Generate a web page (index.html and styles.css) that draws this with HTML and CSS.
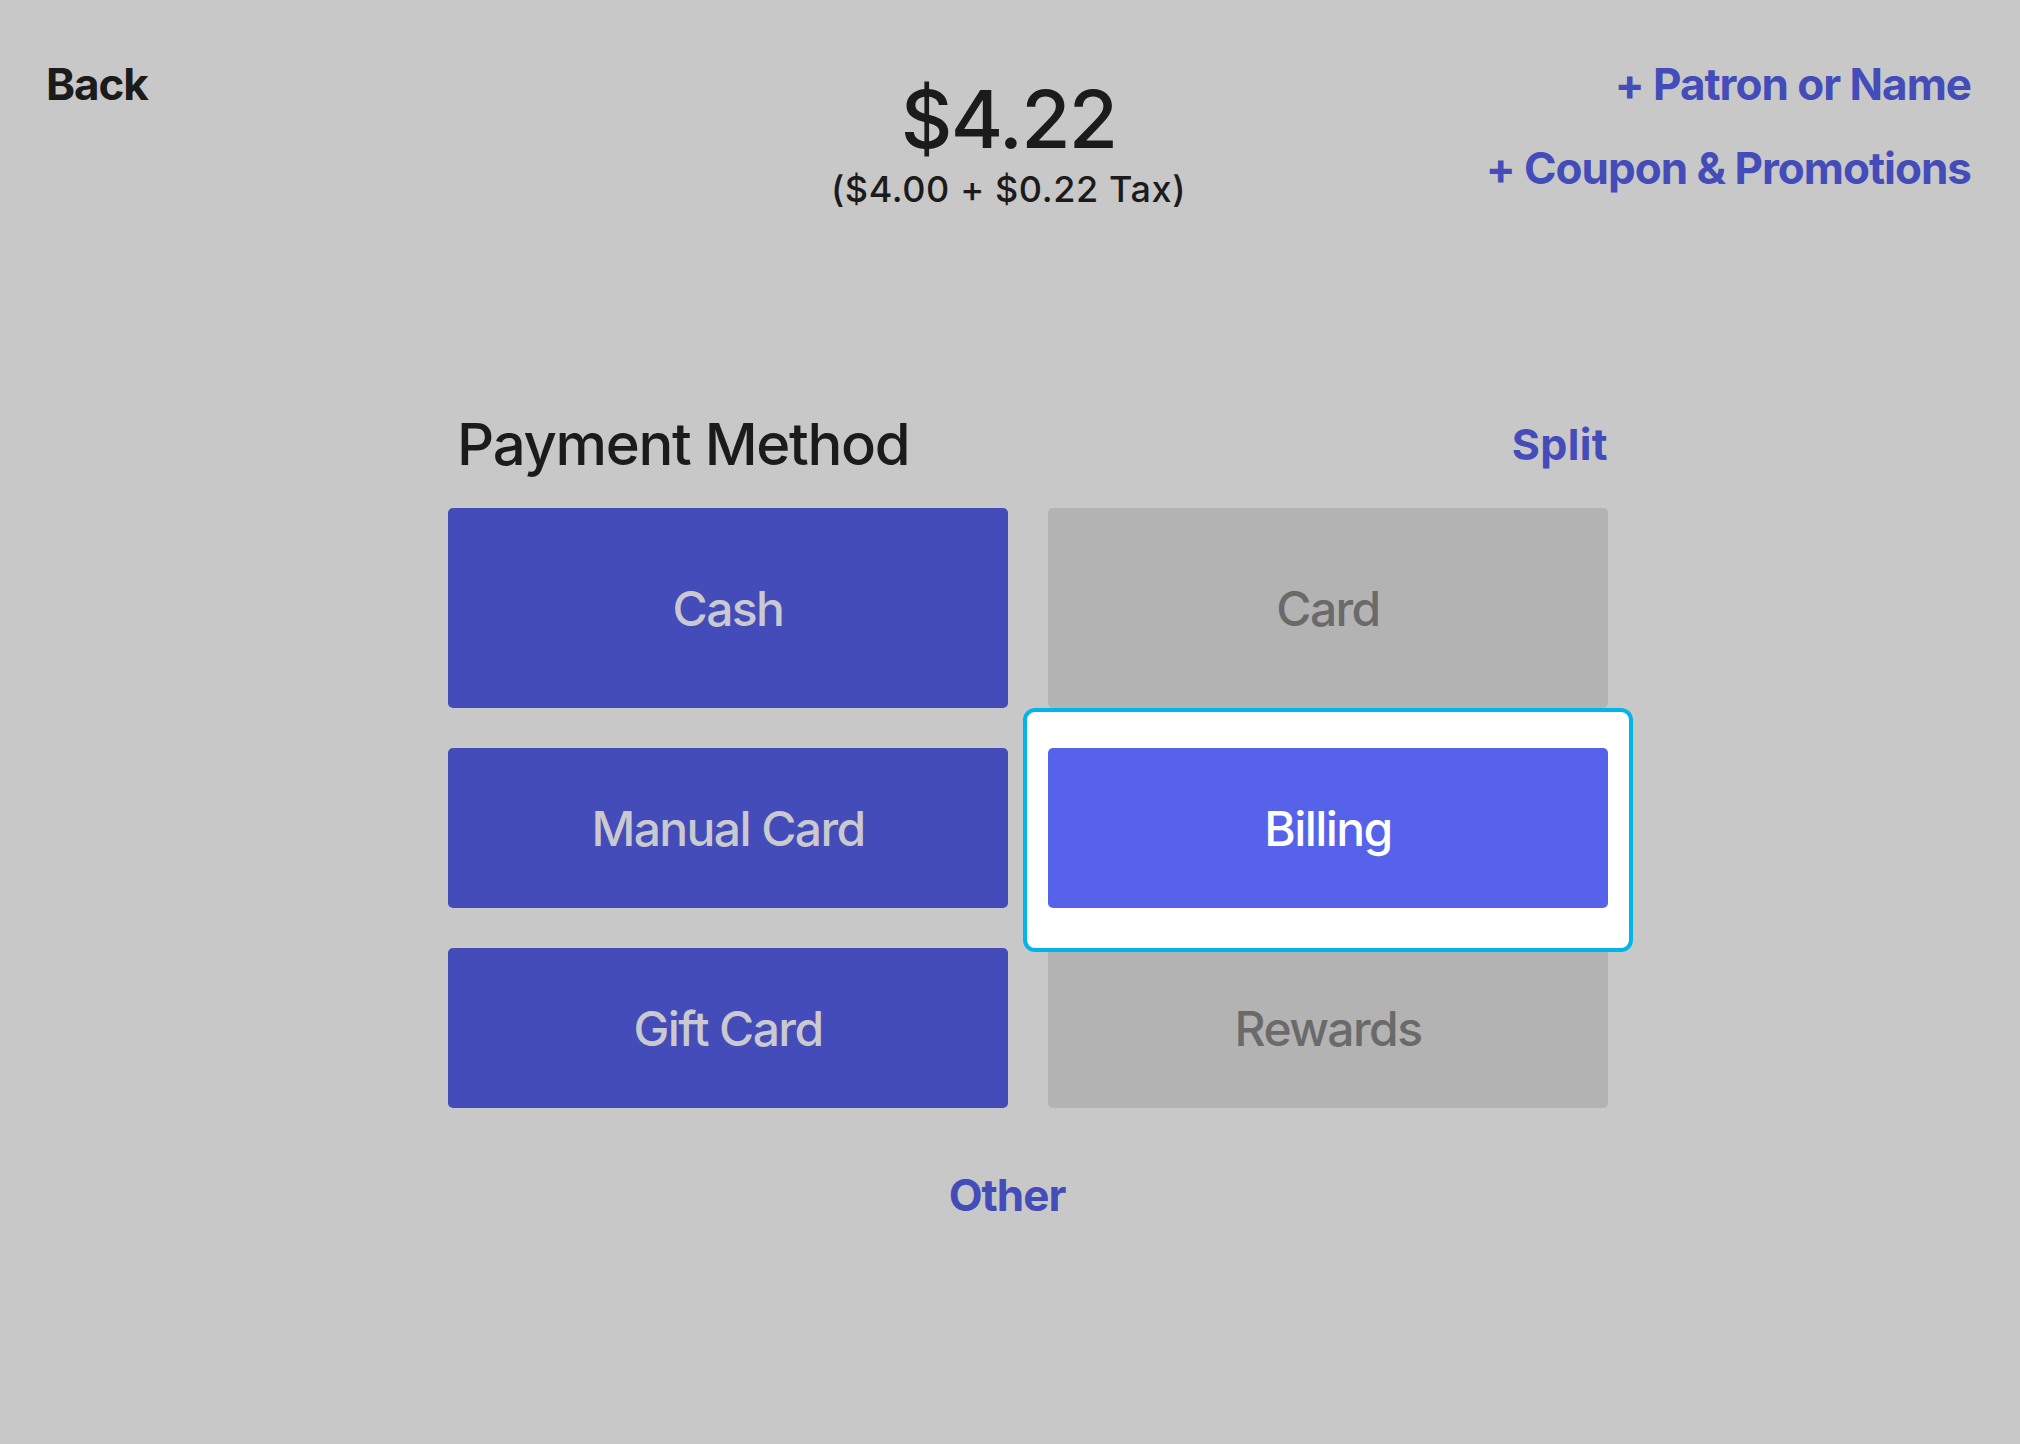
FILE: index.html
```html
<!DOCTYPE html>
<html lang="en">
<head>
<meta charset="utf-8">
<title>Payment Method</title>
<link rel="stylesheet" href="styles.css">
</head>
<body>
<div class="page">
  <header class="top">
    <div class="top-left"><a class="back">Back</a></div>
    <div class="total">
      <div class="amount">$4.22</div>
      <div class="breakdown">($4.00 + $0.22 Tax)</div>
    </div>
    <div class="top-right">
      <a class="link">+ Patron or Name</a>
      <a class="link">+ Coupon &amp; Promotions</a>
    </div>
  </header>

  <main class="main">
    <section class="payment">
      <div class="payment-head">
        <h1 class="payment-title">Payment Method</h1>
        <a class="link split">Split</a>
      </div>
      <div class="methods">
        <button class="method method-blue tall">Cash</button>
        <button class="method method-gray tall">Card</button>
        <button class="method method-blue">Manual Card</button>
        <div class="spot-cell">
          <div class="spot"></div>
          <button class="method method-active">Billing</button>
        </div>
        <button class="method method-blue">Gift Card</button>
        <button class="method method-gray">Rewards</button>
      </div>
    </section>
    <a class="link other">Other</a>
  </main>
</div>
</body>
</html>
```

FILE: styles.css
```css
* { box-sizing: border-box; }

html, body {
  margin: 0;
  padding: 0;
}

body {
  background: #c8c8c8;
  font-family: Inter, "Noto Sans", "Liberation Sans", sans-serif;
  color: #1b1b1b;
  width: 2020px;
  height: 1444px;
  overflow: hidden;
}

.page {
  padding: 62px 49px 0 46px;
}

.top {
  display: grid;
  grid-template-columns: 1fr auto 1fr;
  align-items: start;
}

.back {
  display: inline-block;
  font-size: 44px;
  line-height: 1;
  font-weight: 700;
  color: #1b1b1b;
  letter-spacing: -1.1px;
}

.total {
  margin-top: 17px;
  text-align: center;
}

.amount {
  font-size: 80px;
  line-height: 1;
  font-weight: 500;
  letter-spacing: -1.8px;
}

.breakdown {
  margin-top: 12px;
  font-size: 36px;
  line-height: 1;
  font-weight: 500;
  letter-spacing: 0.6px;
}

.top-right {
  display: flex;
  flex-direction: column;
  align-items: flex-end;
  gap: 40px;
}

.link {
  display: inline-block;
  font-size: 44px;
  line-height: 1;
  font-weight: 700;
  color: #434cb9;
  letter-spacing: -1px;
}

.main {
  display: flex;
  flex-direction: column;
  align-items: center;
  margin-top: 208px;
}

.payment {
  width: 1160px;
  margin-left: 39px;
}

.payment-head {
  display: flex;
  justify-content: space-between;
  align-items: center;
  padding-left: 9px;
  margin-bottom: 35px;
}

.payment-title {
  margin: 0;
  font-size: 58px;
  line-height: 1;
  font-weight: 500;
  letter-spacing: -1.3px;
  color: #1b1b1b;
}

.split {
  font-size: 43px;
  letter-spacing: 0.4px;
}

.methods {
  display: grid;
  grid-template-columns: 560px 560px;
  grid-template-rows: 200px 160px 160px;
  gap: 40px;
}

.method {
  display: flex;
  align-items: center;
  justify-content: center;
  width: 100%;
  height: 100%;
  border: 0;
  border-radius: 5px;
  padding: 0;
  margin: 0;
  font-family: inherit;
  font-size: 48px;
  font-weight: 500;
  letter-spacing: -1.6px;
}

.method-blue {
  background: #434cb9;
  color: #c9c9cf;
}

.method-gray {
  background: #b3b3b3;
  color: #6a6a6a;
}

.method-active {
  position: relative;
  z-index: 2;
  background: #5762ea;
  color: #ffffff;
}

.spot-cell {
  position: relative;
}

.spot {
  position: absolute;
  top: -40px;
  bottom: -44px;
  left: -25px;
  right: -25px;
  z-index: 1;
  background: #ffffff;
  border: 4px solid #00b4ec;
  border-radius: 12px;
}

.other {
  margin-top: 65px;
  margin-right: 3px;
}
```
